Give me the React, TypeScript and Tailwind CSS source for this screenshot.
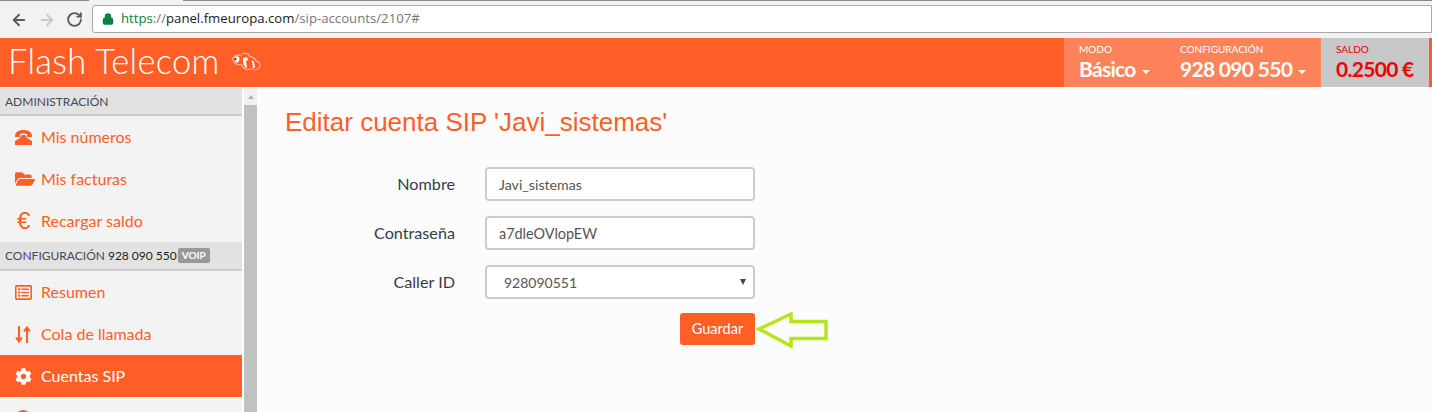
import { ArrowLeft, ArrowRight, RotateCw, Lock } from "lucide-react";
import { FaFolderOpen, FaRegListAlt, FaCog } from "react-icons/fa";
import type { ReactNode } from "react";

function Fish() {
  return (
    <svg width="32" height="22" viewBox="0 0 32 22" className="mt-[13px] ml-[10px]">
      <path d="M2 8 C3 4 8 2 11 4 C13 0 19 1 20 5 C24 5 26 8 27 10 C30 10 31 13 30 16 C28 20 24 20 22 18 C18 20 13 19 11 14 C7 15 3 13 2 8Z" fill="#ffffff" opacity="0.55" />
      <path d="M3 8 C5 5 8 4 11 5 C13 2 18 2 19 6 C23 6 25 9 26 11 C29 11 30 13 29 16 C27 19 24 19 22 17 C18 19 14 18 12 13 C8 14 4 12 3 8Z" fill="#ff5f27" />
      <path d="M5 6 C6 5 8 5 9 6 C10 9 9 11 7 12 C5 11 4 9 5 6Z" fill="#ffffff" />
      <path d="M13 7 L17 6 L18 9 L16 10 L17 17 L15 16 C14 14 13 12 13 10Z" fill="#ffffff" />
      <path d="M22 9 L24 11 L25 17 L23 17Z" fill="#ffffff" />
      <circle cx="5.5" cy="8" r="1" fill="#222222" />
    </svg>
  );
}

function PhoneIcon() {
  return (
    <svg width="17" height="15" viewBox="0 0 17 15" fill="currentColor">
      <path d="M0 6 C0 2 4 0 8.5 0 C13 0 17 2 17 6 L17 7 L12 7 L12 4 C10 3.2 7 3.2 5 4 L5 7 L0 7Z" />
      <path d="M5 8 L6.5 5 L10.5 5 L12 8 L17 11 L17 15 L0 15 L0 11Z" />
    </svg>
  );
}

function SortIcon() {
  return (
    <svg width="16" height="17" viewBox="0 0 16 17" fill="none" stroke="currentColor" strokeWidth="2">
      <path d="M4 0 L4 15 M1 11.5 L4 15.5 L7 11.5" />
      <path d="M12 17 L12 2 M9 5.5 L12 1.5 L15 5.5" />
    </svg>
  );
}

function SideItem({ icon, label, active }: { icon: ReactNode; label?: string; active?: boolean }) {
  return (
    <div className={`flex items-center h-[42px] pl-[15px] text-[16px] ${active ? "bg-[#ff5f27] text-white" : "text-[#ff5f27]"}`}>
      <span className="w-[26px] flex-shrink-0 flex items-center">{icon}</span>
      {label && <span>{label}</span>}
    </div>
  );
}

function SideHeader({ children, tall }: { children: ReactNode; tall?: boolean }) {
  return (
    <div className={`flex items-center pl-[5px] bg-[#e2e2e2] border-b-2 border-[#cccccc] text-[12px] text-[#444a57] ${tall ? "h-[29px]" : "h-[28px] pt-px"}`}>
      {children}
    </div>
  );
}

function Caret() {
  return <span className="inline-block ml-[6px] mb-[3px] w-0 h-0 border-x-[4px] border-x-transparent border-t-[4px] border-t-white" />;
}

function Field({ label, children }: { label: string; children: ReactNode }) {
  return (
    <div className="flex items-center h-[34px]">
      <label className="w-[95px] text-right text-[16.2px] text-[#333c4a]">{label}</label>
      <div className="ml-[30px] w-[270px]">{children}</div>
    </div>
  );
}

export default function App() {
  return (
    <div className="w-[1432px] h-[412px] overflow-hidden bg-white flex flex-col font-['Lato',sans-serif]">
      {/* Browser bar */}
      <div className="h-[38px] flex-shrink-0 bg-[#f2f2f2] flex flex-col relative">
        <div className="h-px flex">
          <div className="w-[89px] bg-[#8a8a8a]" />
          <div className="w-[94px]" />
          <div className="flex-1 bg-[#8a8a8a]" />
        </div>
        <div className="flex items-center pl-[10px] gap-[10px] h-[37px]">
          <ArrowLeft size={18} strokeWidth={2.4} className="text-[#5a5a5a]" />
          <ArrowRight size={18} strokeWidth={2.4} className="text-[#c8c8c8]" />
          <RotateCw size={17} strokeWidth={2.6} className="text-[#5a5a5a]" />
        </div>
        <div className="absolute left-[92px] right-0 top-[5px] h-[28px] bg-white border border-[#a9a9a9] rounded-l-[3px] flex items-center pl-[9px] font-['Open_Sans',sans-serif] text-[13.2px]">
          <Lock size={12} strokeWidth={3} className="text-[#0b8043] fill-[#0b8043] mr-[7px]" />
          <span className="text-[#0b8043]">https</span>
          <span className="text-[#777777]">://</span>
          <span className="text-[#222222]">panel.fmeuropa.com</span>
          <span className="text-[#777777]">/sip-accounts/2107#</span>
        </div>
      </div>

      {/* App header */}
      <div className="h-[49px] flex-shrink-0 bg-[#ff5f27] flex items-stretch text-white">
        <div className="pl-[8px] flex items-start">
          <span className="text-[34.5px] font-light leading-[46px] tracking-[0.3px]">Flash Telecom</span>
          <Fish />
        </div>
        <div className="ml-auto flex items-stretch">
          <div className="w-[101px] bg-[#ff835a] pl-[15px] pt-[4px]">
            <div className="text-[10px] leading-[12px] mt-[1px]">MODO</div>
            <div className="text-[21px] font-bold leading-[27px] whitespace-nowrap tracking-[-0.7px]">Básico<Caret /></div>
          </div>
          <div className="w-[156px] bg-[#ff835a] pl-[15px] pt-[4px]">
            <div className="text-[10px] leading-[12px] mt-[1px]">CONFIGURACIÓN</div>
            <div className="text-[21px] font-bold leading-[27px] whitespace-nowrap tracking-[-0.7px]">928 090 550<Caret /></div>
          </div>
          <div className="w-[108px] bg-[#c8c8c8] pl-[15px] pt-[4px] text-[#f00000]">
            <div className="text-[10px] leading-[12px] mt-[1px]">SALDO</div>
            <div className="text-[21px] font-bold leading-[27px] whitespace-nowrap tracking-[-0.7px]">0.2500 €</div>
          </div>
          <div className="w-[3px]" />
        </div>
      </div>

      <div className="flex flex-1 min-h-0 mt-px">
        {/* Sidebar */}
        <aside className="w-[242px] flex-shrink-0 bg-[#f3f3f3] overflow-hidden">
          <SideHeader>ADMINISTRACIÓN</SideHeader>
          <SideItem icon={<PhoneIcon />} label="Mis números" />
          <SideItem icon={<FaFolderOpen size={20} />} label="Mis facturas" />
          <SideItem icon={<span className="ml-[2px] text-[24px] leading-none font-['Liberation_Sans',sans-serif]">€</span>} label="Recargar saldo" />
          <SideHeader tall>
            CONFIGURACIÓN
            <span className="ml-[3px] text-[#222222]">928 090 550</span>
            <span className="ml-[1px] h-[15px] px-[4px] rounded-[2px] bg-[#999999] text-white text-[10px] font-bold flex items-center">VOIP</span>
          </SideHeader>
          <SideItem icon={<FaRegListAlt size={17} />} label="Resumen" />
          <SideItem icon={<SortIcon />} label="Cola de llamada" />
          <SideItem active icon={<FaCog size={17} />} label="Cuentas SIP" />
          <SideItem icon={<span className="block w-[16px] h-[16px] rounded-full border-2 border-[#ff5f27]" />} />
        </aside>

        {/* Scrollbar */}
        <div className="w-[18px] flex-shrink-0 bg-white flex">
          <div className="ml-[2px] w-[13px] bg-[#f1f1f1] flex flex-col items-center">
            <span className="mt-[7px] w-0 h-0 border-x-[3.5px] border-x-transparent border-b-[4px] border-b-[#b0b0b0]" />
            <div className="mt-[6px] w-full flex-1 bg-[#c1c1c1]" />
          </div>
        </div>

        {/* Content */}
        <main className="flex-1 bg-[#fcfcfc] pl-[25px]">
          <h1 className="mt-[19px] text-[26px] leading-[30px] text-[#ff5f27] font-['Liberation_Sans',sans-serif]">Editar cuenta SIP 'Javi_sistemas'</h1>
          <div className="mt-[30px] ml-[75px] w-[395px] flex flex-col gap-[15px]">
            <Field label="Nombre">
              <input readOnly value="Javi_sistemas" className="w-full h-[34px] px-[12px] bg-white border-2 border-[#cccccc] rounded-[4px] text-[14.2px] text-[#555555] outline-none" />
            </Field>
            <Field label="Contraseña">
              <input readOnly value="a7dleOVlopEW" className="w-full h-[34px] px-[12px] bg-white border-2 border-[#cccccc] rounded-[4px] text-[14.4px] text-[#555555] outline-none" />
            </Field>
            <Field label="Caller ID">
              <div className="w-full h-[34px] pl-[17px] pr-[7px] bg-white border-2 border-[#cccccc] rounded-[4px] text-[14px] text-[#555555] flex items-center justify-between">
                <span>928090551</span>
                <span className="w-0 h-0 border-x-[3px] border-x-transparent border-t-[6px] border-t-[#444444]" />
              </div>
            </Field>
          </div>
          <div className="mt-[10px] ml-[395px] flex items-center">
            <button className="w-[75px] h-[32px] bg-[#ff5f27] text-white text-[14.5px] rounded-[3px]">Guardar</button>
            <svg width="74" height="40" viewBox="0 0 74 40" className="ml-px">
              <path d="M3 20 L35 5 L35 12.5 L70 12.5 L70 29.5 L35 29.5 L35 37Z" fill="none" stroke="#b5e61d" strokeWidth="3.5" />
            </svg>
          </div>
        </main>
      </div>
    </div>
  );
}
